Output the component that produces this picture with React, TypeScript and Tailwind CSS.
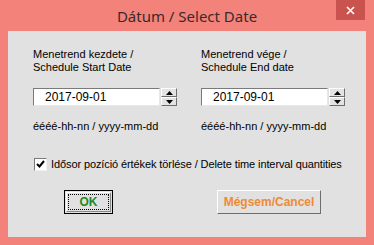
import React from "react";

function Spin() {
  return (
    <div className="flex flex-col ml-[1px]">
      <div className="w-[16px] h-[9px] bg-[#e3e3e3] border border-t-white border-l-white border-r-[#6d6d6d] border-b-[#6d6d6d] flex items-center justify-center">
        <svg width="7" height="4" viewBox="0 0 7 4"><path d="M3.5 0 L7 4 L0 4 Z" fill="#000" /></svg>
      </div>
      <div className="w-[16px] h-[9px] bg-[#e3e3e3] border border-t-white border-l-white border-r-[#6d6d6d] border-b-[#6d6d6d] flex items-center justify-center">
        <svg width="7" height="4" viewBox="0 0 7 4"><path d="M0 0 L7 0 L3.5 4 Z" fill="#000" /></svg>
      </div>
    </div>
  );
}

function DateField({ l1, l2 }: { l1: string; l2: string }) {
  return (
    <div className="flex flex-col w-[160px]">
      <div className="leading-[13px]">{l1}</div>
      <div className="leading-[13px]">{l2}</div>
      <div className="flex mt-[14px]">
        <div className="w-[127px] h-[18px] bg-white border border-t-[#7a7a7a] border-l-[#7a7a7a] border-r-[#e8e8e8] border-b-[#e8e8e8] flex items-center pl-[11px] text-[12px]">
          2017-09-01
        </div>
        <Spin />
      </div>
      <div className="mt-[14px] leading-[13px]">éééé-hh-nn / yyyy-mm-dd</div>
    </div>
  );
}

export default function App() {
  return (
    <div
      className="w-[374px] h-[245px] bg-[#f3827a] flex flex-col"
      style={{ fontFamily: "'Liberation Sans', Arial, sans-serif" }}
    >
      <div className="h-[31px] relative flex items-center justify-center">
        <span
          className="text-[15px] text-[#3a2a2a] mt-[1px]"
          style={{ fontFamily: "'Noto Sans', 'Open Sans', sans-serif" }}
        >
          Dátum / Select Date
        </span>
        <div className="absolute right-[9px] top-0 w-[29px] h-[20px] bg-[#c9534e] flex items-center justify-center">
          <svg width="9" height="9" viewBox="0 0 9 9">
            <path d="M1 1 L8 8 M8 1 L1 8" stroke="#fff" strokeWidth="1.6" />
          </svg>
        </div>
      </div>
      <div className="mx-[8px] mb-[8px] flex-1 bg-[#e1e1e1] text-[11px] text-black flex flex-col pl-[25px] pt-[17px]">
        <div className="flex gap-[8px]">
          <DateField l1="Menetrend kezdete /" l2="Schedule Start Date" />
          <DateField l1="Menetrend vége /" l2="Schedule End date" />
        </div>
        <div className="flex items-center mt-[23px] ml-[1px]">
          <div className="w-[13px] h-[13px] bg-white border border-t-[#7a7a7a] border-l-[#7a7a7a] border-r-[#f0f0f0] border-b-[#f0f0f0] flex items-center justify-center">
            <svg width="9" height="8" viewBox="0 0 9 8">
              <path d="M1 4 L3.5 6.5 L8 1" stroke="#000" strokeWidth="2" fill="none" />
            </svg>
          </div>
          <span className="ml-[4px] tracking-[-0.1px]">Idősor pozíció értékek törlése / Delete time interval quantities</span>
        </div>
        <div className="flex mt-[17px]">
          <div className="ml-[31px] w-[49px] h-[24px] border border-black bg-[#e1e1e1] p-[1px]">
            <div className="w-full h-full border border-t-white border-l-white border-r-[#888] border-b-[#888] p-[1px]">
              <div className="w-full h-full border border-dotted border-black flex items-center justify-center font-bold text-[12px] text-[#1a8a2a]">
                OK
              </div>
            </div>
          </div>
          <div className="ml-[104px] w-[104px] h-[24px] border border-t-white border-l-white border-r-[#6d6d6d] border-b-[#6d6d6d] bg-[#e1e1e1] flex items-center justify-center font-bold text-[12px] text-[#f08a36]">
            Mégsem/Cancel
          </div>
        </div>
      </div>
    </div>
  );
}
